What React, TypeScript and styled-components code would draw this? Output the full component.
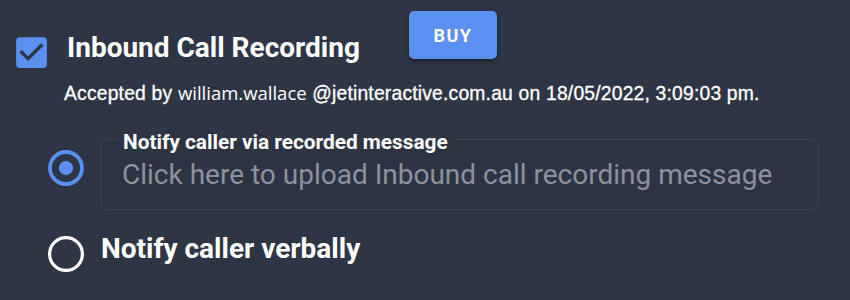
import styled, { createGlobalStyle } from "styled-components";
import { FC } from "react";

const GlobalStyle = createGlobalStyle`
  html, body {
    margin: 0;
    padding: 0;
    background: #2e3646;
  }
  body {
    width: 850px;
    height: 300px;
    overflow: hidden;
    font-family: Roboto, "Liberation Sans", sans-serif;
    color: #ffffff;
  }
`;

const Page = styled.div`
  display: flex;
  flex-direction: column;
`;

const Header = styled.div`
  display: flex;
  align-items: flex-start;
  padding: 11px 0 0 11px;
`;

const CheckIcon = styled.svg`
  width: 41px;
  height: 41px;
  margin-top: 21px;
  flex-shrink: 0;
`;

const Title = styled.h1`
  margin: 20px 0 0 15px;
  font-family: Roboto, sans-serif;
  font-weight: 700;
  font-size: 28px;
  line-height: normal;
`;

const BuyButton = styled.button`
  margin-left: 49px;
  width: 88px;
  height: 48px;
  border: 0;
  border-radius: 5px;
  background: #5b8ff0;
  color: #ffffff;
  font-family: Roboto, sans-serif;
  font-weight: 700;
  font-size: 18px;
  letter-spacing: 1.5px;
  box-shadow: 0 3px 5px rgba(0, 0, 0, 0.3), 0 1px 2px rgba(0, 0, 0, 0.25);
  cursor: pointer;
`;

const Accepted = styled.p`
  margin: 7px 0 0 64px;
  font-family: "Liberation Sans", Arial, sans-serif;
  font-weight: 400;
  font-size: 19.3px;
  letter-spacing: 0.2px;
  line-height: normal;
  white-space: nowrap;
  -webkit-text-stroke: 0.3px #ffffff;
`;

const User = styled.span`
  font-family: "Open Sans", sans-serif;
  font-weight: 400;
  font-size: 18.5px;
  letter-spacing: 0;
  -webkit-text-stroke: 0;
`;

const Options = styled.div`
  display: flex;
  flex-direction: column;
  gap: 22px;
  margin-top: 20px;
  padding: 0 32px 0 48px;
`;

const OptionRow = styled.div`
  display: flex;
  align-items: flex-start;
  gap: 17px;
`;

const RadioIcon = styled.svg<{ $offset: number }>`
  width: 36px;
  height: 36px;
  flex-shrink: 0;
  margin-top: ${(p) => p.$offset}px;
`;

const Field = styled.fieldset`
  flex: 1;
  min-width: 0;
  margin: 0;
  padding: 0 15px 18px 15px;
  border: 1px solid #3b4355;
  border-radius: 6px;
  background: #2c3443;
`;

const Legend = styled.legend`
  padding: 5px 6px 0;
  font-weight: 700;
  font-size: 20.8px;
  line-height: 24px;
  color: #ffffff;
`;

const Placeholder = styled.div`
  margin-top: 4px;
  padding-left: 5px;
  font-size: 28px;
  line-height: normal;
  color: #8c929b;
  cursor: pointer;
  white-space: nowrap;
`;

const OptionLabel = styled.span`
  font-weight: 700;
  font-size: 28px;
  line-height: normal;
`;

const Checkbox: FC = () => (
  <CheckIcon viewBox="0 0 24 24">
    <path
      fill="#5b8ff0"
      d="M19 3H5c-1.11 0-2 .9-2 2v14c0 1.1.89 2 2 2h14c1.11 0 2-.9 2-2V5c0-1.1-.89-2-2-2zm-9 14l-5-5 1.41-1.41L10 14.17l7.59-7.59L19 8l-9 9z"
    />
  </CheckIcon>
);

const Radio: FC<{ checked?: boolean; offset: number }> = ({ checked, offset }) => (
  <RadioIcon viewBox="0 0 36 36" $offset={offset}>
    <circle
      cx="18"
      cy="18"
      r={checked ? 16 : 16.4}
      fill="none"
      stroke={checked ? "#5b8ff0" : "#ffffff"}
      strokeWidth={checked ? 3.8 : 3.2}
    />
    {checked && <circle cx="18" cy="18" r="7.1" fill="#5b8ff0" />}
  </RadioIcon>
);

export default function App() {
  return (
    <Page>
      <GlobalStyle />
      <Header>
        <Checkbox />
        <Title>Inbound Call Recording</Title>
        <BuyButton>BUY</BuyButton>
      </Header>
      <Accepted>
        Accepted by <User>william.wallace</User> @jetinteractive.com.au on 18/05/2022, 3:09:03 pm.
      </Accepted>
      <Options>
        <OptionRow>
          <Radio checked offset={25} />
          <Field>
            <Legend>Notify caller via recorded message</Legend>
            <Placeholder>Click here to upload Inbound call recording message</Placeholder>
          </Field>
        </OptionRow>
        <OptionRow>
          <Radio offset={4} />
          <OptionLabel>Notify caller verbally</OptionLabel>
        </OptionRow>
      </Options>
    </Page>
  );
}
